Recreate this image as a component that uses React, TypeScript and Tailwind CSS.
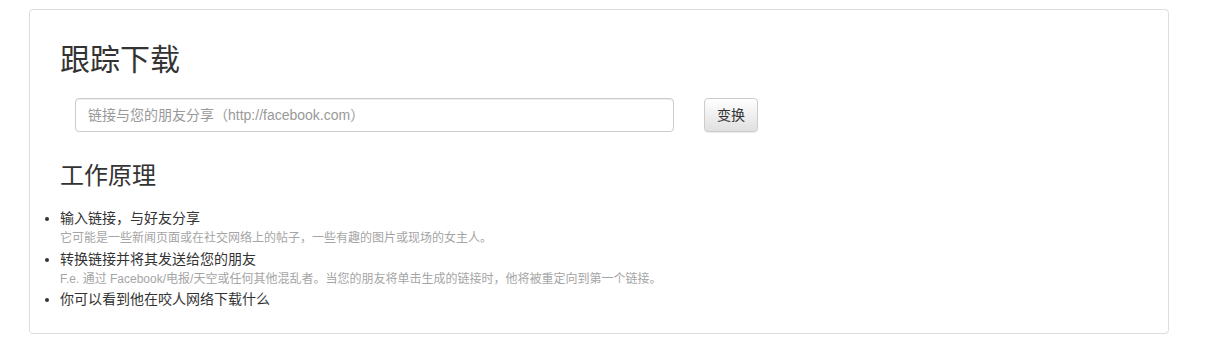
import React from "react";

const font = { fontFamily: '"Liberation Sans", Arial, "Noto Sans CJK SC", sans-serif' };

export default function App() {
  return (
    <div className="min-h-[348px] bg-white pt-[9px] text-[#333]" style={font}>
      <div className="ml-[29px] w-[1140px] rounded-[4px] border border-[#dddddd] bg-white pl-[30px] pr-[30px] pt-[33px] pb-[24px]">
        <h1 className="text-[30px] leading-[33px] font-normal text-[#333]">跟踪下载</h1>
        <div className="mt-[22px] flex items-center pl-[15px]">
          <input
            type="text"
            placeholder="链接与您的朋友分享（http://facebook.com）"
            className="h-[34px] w-[599px] rounded-[4px] border border-[#cccccc] bg-white px-[12px] text-[14px] text-[#555] placeholder:text-[#999] shadow-[inset_0_1px_1px_rgba(0,0,0,0.075)] outline-none"
          />
          <button className="ml-[30px] h-[34px] w-[54px] rounded-[4px] border border-[#cccccc] bg-gradient-to-b from-[#ffffff] to-[#e0e0e0] text-[14px] text-[#333] shadow-[0_1px_1px_rgba(0,0,0,0.075)]">
            变换
          </button>
        </div>
        <h2 className="mt-[30px] text-[24px] leading-[27px] font-normal text-[#333]">工作原理</h2>
        <ul className="mt-[19px] list-disc pl-0 text-[14px] leading-[20px]">
          <li>
            输入链接，与好友分享
            <div className="text-[12px] leading-[21px] text-[#a5a5a5]">
              它可能是一些新闻页面或在社交网络上的帖子，一些有趣的图片或现场的女主人。
            </div>
          </li>
          <li>
            转换链接并将其发送给您的朋友
            <div className="text-[12px] leading-[20px] text-[#a5a5a5]">
              F.e. 通过 Facebook/电报/天空或任何其他混乱者。当您的朋友将单击生成的链接时，他将被重定向到第一个链接。
            </div>
          </li>
          <li>你可以看到他在咬人网络下载什么</li>
        </ul>
      </div>
    </div>
  );
}
